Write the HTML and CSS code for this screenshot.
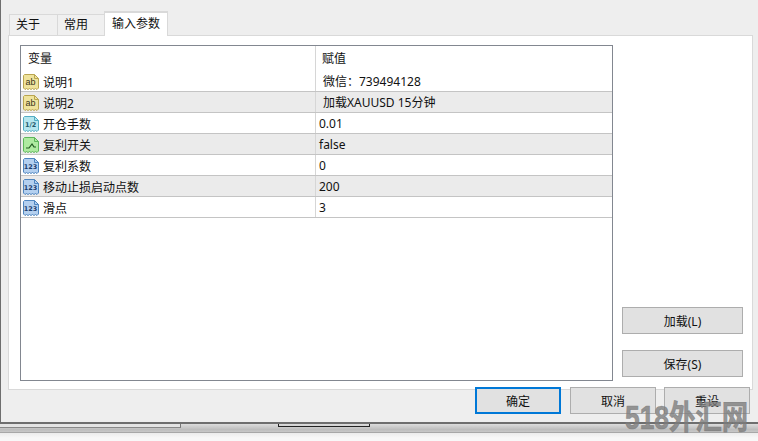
FILE: index.html
```html
<!DOCTYPE html>
<html lang="zh">
<head>
<meta charset="utf-8">
<title>输入参数</title>
<link rel="stylesheet" href="styles.css">
</head>
<body>
<svg class="defs" width="0" height="0" aria-hidden="true">
  <defs>
    <path id="doc" d="M1.5.5H11.5L15.5 4.5V14L14 15.5 12.5 14.5 11 15.5 9.5 14.5 8 15.5 6.5 14.5 5 15.5 3.5 14.5 2 15.5.5 14V1.5Z"/>
    <path id="fold" d="M11.5.5V4.5H15.5" fill="none"/>
  </defs>
</svg>
<div class="dialog">
  <div class="tabs">
    <div class="tab first">关于</div>
    <div class="tab">常用</div>
    <div class="tab active">输入参数</div>
  </div>
  <div class="panel">
    <div class="table">
      <div class="row head"><div class="name">变量</div><div class="value">赋值</div></div>
      <div class="row">
        <div class="name"><svg class="icon str" viewBox="0 0 16 16"><use href="#doc"/><use href="#fold"/><text x="7.4" y="11">ab</text></svg>说明1</div>
        <div class="value note">微信：739494128</div>
      </div>
      <div class="row alt">
        <div class="name"><svg class="icon str" viewBox="0 0 16 16"><use href="#doc"/><use href="#fold"/><text x="7.4" y="11">ab</text></svg>说明2</div>
        <div class="value note">加载XAUUSD 15分钟</div>
      </div>
      <div class="row">
        <div class="name"><svg class="icon dbl" viewBox="0 0 16 16"><use href="#doc"/><use href="#fold"/><text x="7.6" y="11" class="tiny">1/2</text></svg>开仓手数</div>
        <div class="value">0.01</div>
      </div>
      <div class="row alt">
        <div class="name"><svg class="icon bool" viewBox="0 0 16 16"><use href="#doc"/><use href="#fold"/><path class="mark" d="M3 11H6L9 7 11 10H13"/></svg>复利开关</div>
        <div class="value">false</div>
      </div>
      <div class="row">
        <div class="name"><svg class="icon int" viewBox="0 0 16 16"><use href="#doc"/><use href="#fold"/><text x="7.6" y="11" class="tiny">123</text></svg>复利系数</div>
        <div class="value">0</div>
      </div>
      <div class="row alt">
        <div class="name"><svg class="icon int" viewBox="0 0 16 16"><use href="#doc"/><use href="#fold"/><text x="7.6" y="11" class="tiny">123</text></svg>移动止损启动点数</div>
        <div class="value">200</div>
      </div>
      <div class="row">
        <div class="name"><svg class="icon int" viewBox="0 0 16 16"><use href="#doc"/><use href="#fold"/><text x="7.6" y="11" class="tiny">123</text></svg>滑点</div>
        <div class="value">3</div>
      </div>
    </div>
    <div class="side">
      <button class="btn wide">加载(L)</button>
      <button class="btn wide">保存(S)</button>
    </div>
  </div>
  <div class="actions">
    <button class="btn primary">确定</button>
    <button class="btn">取消</button>
    <button class="btn">重设</button>
  </div>
</div>
<div class="strip">
  <div class="strip-ledge"></div>
  <div class="strip-bracket"></div>
</div>
<div class="watermark">518外汇网</div>
</body>
</html>
```
FILE: styles.css
```css
* { box-sizing: border-box; }
html, body { margin: 0; padding: 0; }
body {
  position: relative;
  width: 758px;
  height: 441px;
  overflow: hidden;
  background: linear-gradient(#ececec 433px, #f8f8f8 438px);
  font-family: "Noto Sans", "Noto Sans CJK SC", sans-serif;
  font-size: 12px;
  color: #111;
}
.defs { position: absolute; }
.dialog {
  height: 424px;
  padding: 2px 0 0 7px;
  background: #eeeeee;
  border-left: 1px solid #6e6e6e;
  border-bottom: 2px solid #6e6e6e;
}
.tabs { display: flex; align-items: flex-end; height: 33px; padding-left: 1px; padding-top: 8px; }
.tab {
  width: 48px;
  height: 21px;
  background: #f0f0f0;
  border: 1px solid #d9d9d9;
  border-bottom: 0;
  margin-right: -1px;
  padding-left: 6px;
  line-height: 20px;
}
.tab.first { width: 49px; }
.tab.active {
  width: 64px;
  height: 25px;
  margin: 0 0 -1px 0;
  padding-left: 7px;
  background: #fff;
  border-width: 2px 1px 0;
  line-height: 22px;
  position: relative;
}
.panel {
  display: flex;
  align-items: flex-start;
  width: 745px;
  height: 355px;
  padding: 9px 10px 0 11px;
  background: #fff;
  border: 1px solid #d9d9d9;
}
.table {
  width: 593px;
  height: 336px;
  flex: none;
  border: 1px solid #828790;
}
.row {
  display: flex;
  height: 21px;
  border-bottom: 1px solid #c4c4c4;
}
.row.alt { background: #ebebeb; }
.row.head { height: 25px; border-bottom: 0; }
.name {
  display: flex;
  align-items: center;
  gap: 4px;
  width: 295px;
  flex: none;
  padding: 1px 0 0 2px;
  border-right: 1px solid #d6d6d6;
}
.value { padding-left: 3px; line-height: 22px; }
.value.note { padding-left: 7px; }
.head .name { padding: 0 0 2px 7px; }
.head .value { line-height: 26px; padding-left: 6px; }
.icon { width: 16px; height: 16px; flex: none; stroke-width: 1; overflow: visible; }
.icon text {
  font-family: "Liberation Sans", sans-serif;
  font-size: 9px;
  text-anchor: middle;
  stroke: none;
  fill: #3a3418;
}
.icon text.tiny { font-family: "DejaVu Sans", sans-serif; font-size: 6.5px; font-weight: 700; fill: #1c3f70; }
.str { fill: #efe39c; stroke: #b9a550; }
.dbl { fill: #b5e6ee; stroke: #53adc4; }
.dbl text.tiny { fill: #1f5a6d; }
.bool { fill: #aeeaa0; stroke: #5cb65a; }
.int { fill: #b4d0ef; stroke: #4f86c0; }
.mark { fill: none; stroke: #1f5a1f; stroke-width: 1.2; }
.side {
  display: flex;
  flex-direction: column;
  gap: 16px;
  margin: 262px 0 0 9px;
}
.btn {
  width: 86px;
  height: 27px;
  padding: 0;
  background: #e1e1e1;
  border: 1px solid #adadad;
  font: inherit;
  color: inherit;
}
.btn.wide { width: 121px; }
.btn.primary { border: 2px solid #0078d7; }
.actions {
  display: flex;
  gap: 9px;
  margin: -3px 0 0 467px;
  position: relative;
}
.actions .btn:last-child { margin-left: -1px; }
.strip {
  position: relative;
  height: 9px;
  background: linear-gradient(#dcdcdc, #bdbdbd 70%, #c8c8c8);
  border-bottom: 1px solid #a8a8a8;
}
.strip-ledge {
  position: absolute;
  left: 0;
  top: 0;
  width: 181px;
  height: 4px;
  background: #e4e4e4;
  border-right: 1px solid #777;
  border-bottom: 1px solid #888;
}
.strip-bracket {
  position: absolute;
  left: 278px;
  top: 0;
  width: 92px;
  height: 3px;
  border: 1px solid #222;
  border-top: 0;
}
.watermark {
  position: absolute;
  left: 625px;
  top: 398px;
  color: rgba(125, 125, 125, .8);
  font-family: "Liberation Sans", "Noto Sans CJK SC", sans-serif;
  font-size: 33px;
  font-weight: 700;
  line-height: 40px;
  white-space: nowrap;
  -webkit-text-stroke: .7px rgba(125, 125, 125, .8);
  transform: scaleX(.8);
  transform-origin: left center;
}
```
